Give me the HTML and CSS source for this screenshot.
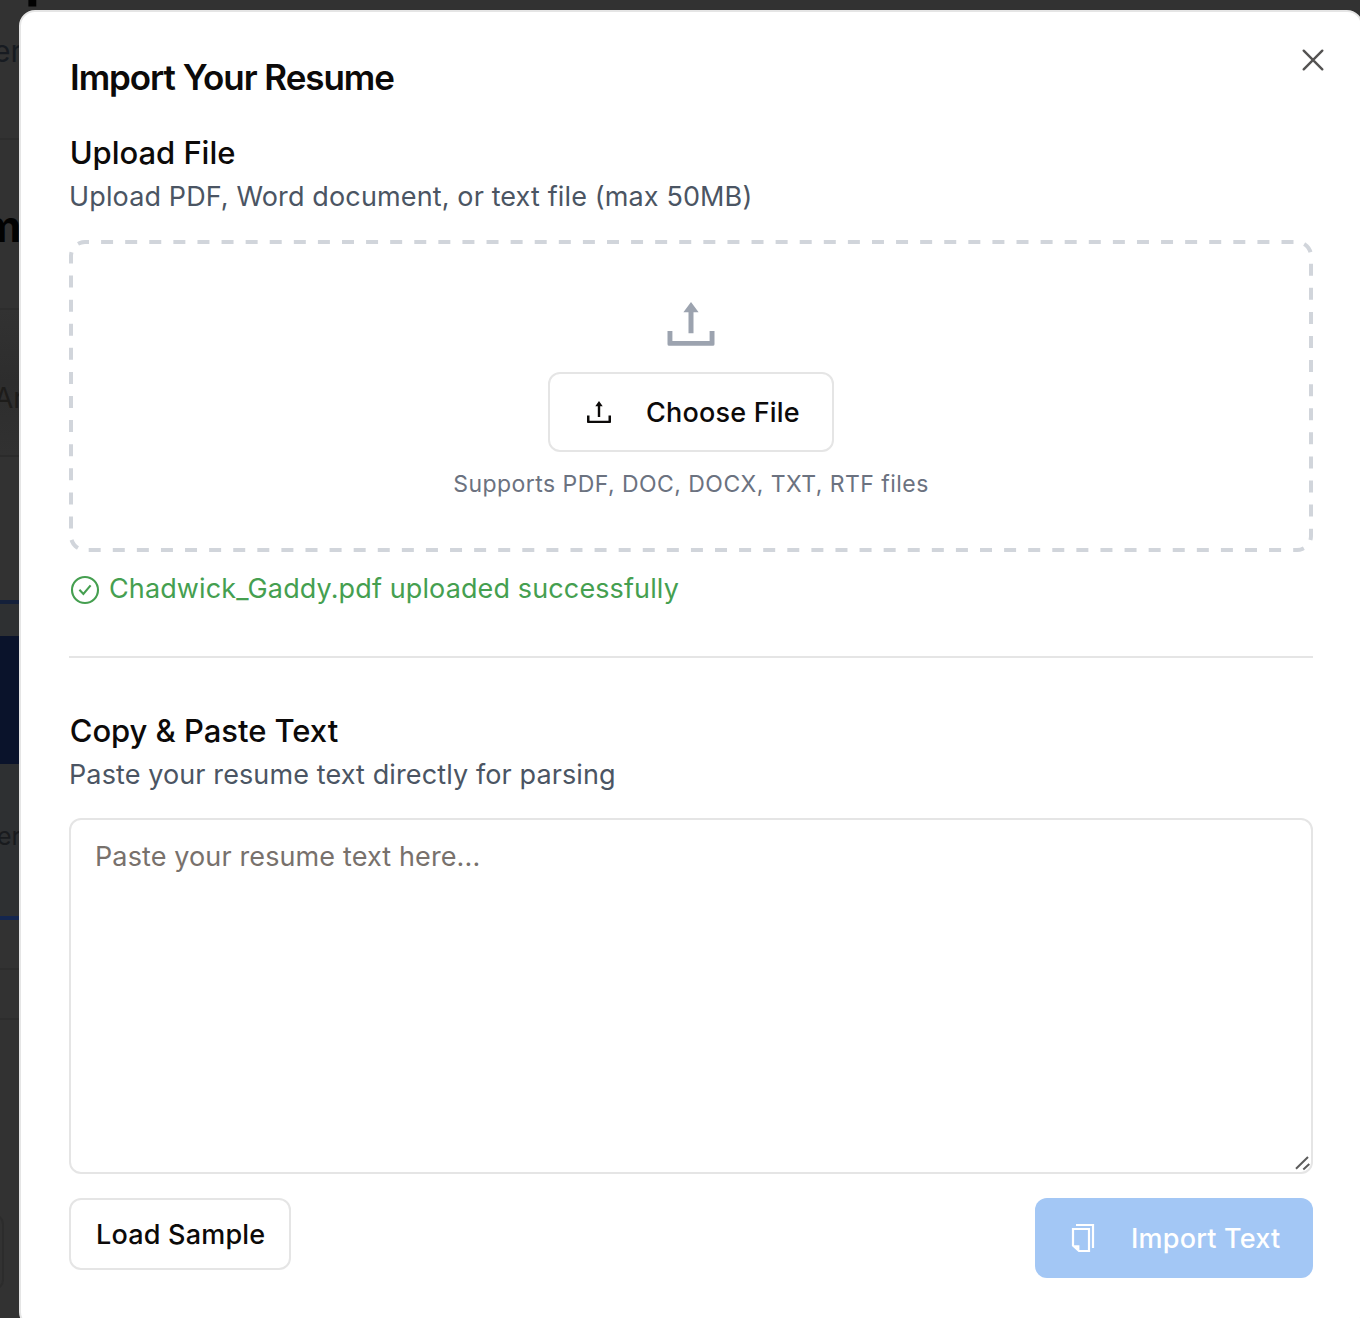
FILE: index.html
```html
<!DOCTYPE html>
<html lang="en">
<head>
<meta charset="utf-8">
<title>Import Your Resume</title>
<link rel="stylesheet" href="styles.css">
</head>
<body>
<div class="page" aria-hidden="true">
  <div class="page-head"><span class="page-title">p</span><span class="page-lead">era</span></div>
  <div class="page-section"><span class="page-subtitle">m</span></div>
  <div class="page-row">Ar</div>
  <div class="page-space"></div>
  <div class="page-card">
    <div class="page-bar"></div>
    <div class="page-note">er</div>
  </div>
  <div class="page-gap"></div>
  <div class="page-strip"></div>
  <div class="page-foot"><div class="page-box"></div></div>
</div>

<main class="dialog" role="dialog" aria-labelledby="dialog-title">
  <button class="close" aria-label="Close">
    <svg width="32" height="32" viewBox="0 0 32 32"><path d="M6.7 6.7 25.3 25.3M25.3 6.7 6.7 25.3"/></svg>
  </button>
  <h1 class="title" id="dialog-title"><span>Import Your Resume</span></h1>

  <section class="upload">
    <h2 class="heading heading-upload"><span>Upload File</span></h2>
    <p class="description description-upload"><span>Upload PDF, Word document, or text file (max 50MB)</span></p>
    <div class="dropzone">
      <svg class="dropzone-outline" viewBox="0 0 1244 312"><rect width="1244" height="312" rx="16"/></svg>
      <svg class="dropzone-icon" viewBox="0 0 64 64"><path d="M32 10 39.6 20.3H34.5V41.3H29.5V20.3H24.4ZM8.5 39H13.4V49H50.6V39H55.5V52.2Q55.5 53.8 53.8 53.8H10.2Q8.5 53.8 8.5 52.2Z"/></svg>
      <button class="button choose">
        <svg class="button-icon" viewBox="0 0 64 64"><path d="M32 10 39.4 20.3H34.4V42H29.6V20.3H24.6ZM8 39H13V49.4H51V39H56V52.2Q56 54 54.2 54H9.8Q8 54 8 52.2Z"/></svg>
        <span>Choose File</span>
      </button>
      <p class="hint"><span>Supports PDF, DOC, DOCX, TXT, RTF files</span></p>
    </div>
    <p class="status">
      <svg viewBox="0 0 32 32"><circle cx="16" cy="16" r="13"/><path d="M10.4 15.7 14.4 20 21.6 11.3"/></svg>
      <span>Chadwick_Gaddy.pdf uploaded successfully</span>
    </p>
  </section>

  <hr class="divider">

  <section class="paste">
    <h2 class="heading heading-paste"><span>Copy &amp; Paste Text</span></h2>
    <p class="description description-paste"><span>Paste your resume text directly for parsing</span></p>
    <div class="field">
      <textarea class="textarea" placeholder="Paste your resume text here..."></textarea>
      <svg class="grip" viewBox="0 0 16 16"><path d="M2 13.8 14 2M9.3 14.6 15.3 9"/></svg>
    </div>
    <div class="actions">
      <button class="button sample"><span>Load Sample</span></button>
      <button class="button import">
        <svg class="button-icon" viewBox="0 0 32 32"><path d="M6 7H22V29H12L6 23.5ZM6.5 24.3H11.3V29M9 3H26V26"/></svg>
        <span>Import Text</span>
      </button>
    </div>
  </section>
</main>
</body>
</html>
```

FILE: styles.css
```css
* { box-sizing: border-box; }

body {
  margin: 0;
  width: 1360px;
  height: 1318px;
  overflow: hidden;
  position: relative;
  background: #323232;
  color: #0c0a09;
  font-family: Inter, "Liberation Sans", sans-serif;
}

h1, h2, p { margin: 0; font-weight: 400; }
button, textarea { font-family: inherit; margin: 0; }
svg { display: block; flex: none; }

/* Dimmed page behind the dialog */
.page { width: 60px; height: 1318px; overflow: hidden; display: flex; flex-direction: column; }
.page > div { flex: none; }
.page-head { height: 140px; border-bottom: 2px solid #2d2d2d; display: flex; flex-direction: column; }
.page-title { height: 6px; padding-left: 25px; line-height: 0; font-size: 54px; font-weight: 700; color: #020202; margin-top: -23px; margin-bottom: 41px; }
.page-lead { margin-left: -7px; height: 56px; line-height: 55px; font-size: 30px; color: #171b21; }
.page-section { height: 170px; border-bottom: 2px solid #2d2d2d; }
.page-subtitle { display: block; margin-left: -18px; padding-top: 58px; line-height: 56px; font-size: 43px; font-weight: 700; color: #020202; }
.page-row { height: 147px; padding-top: 60px; border-bottom: 2px solid #2b2b2b; line-height: 56px; font-size: 28px; color: #1d1c1a; text-indent: -6px; background: linear-gradient(#323232, #2d2d2d 50%, #313131); }
.page-space { height: 143px; }
.page-card { height: 320px; padding-top: 32px; border-top: 4px solid #14203a; border-bottom: 4px solid #14264f; background: #2e3032; }
.page-bar { height: 128px; background: #0a132b; }
.page-note { margin-left: -3px; padding-top: 52px; line-height: 40px; font-size: 25px; color: #191b1e; }
.page-gap { height: 50px; border-bottom: 2px solid #2d2d2d; }
.page-strip { height: 50px; border-bottom: 2px solid #2d2d2d; }
.page-foot { height: 298px; padding-top: 194px; }
.page-box { width: 20px; height: 76px; margin-left: -16px; border: 2px solid #2c2c2c; border-radius: 12px; }

/* Dialog */
.dialog {
  position: absolute;
  left: 19px;
  top: 10px;
  width: 1344px;
  height: 1318px;
  padding: 48px;
  border: 2px solid #e5e5e5;
  border-radius: 16px;
  background: #fff;
  display: flex;
  flex-direction: column;
}

.close { position: absolute; top: 32px; right: 32px; padding: 0; border: 0; background: none; }
.close path { fill: none; stroke: #545352; stroke-width: 2.4; stroke-linecap: round; }

.title { height: 36px; margin-bottom: 32px; padding-left: 1px; line-height: 34px; font-size: 35px; font-weight: 600; letter-spacing: -1.06px; }
.heading { height: 48px; padding-left: 0.7px; line-height: 49px; font-size: 31px; font-weight: 500; letter-spacing: -0.04px; }
.description { height: 40px; margin-bottom: 24px; line-height: 41px; font-size: 27px; letter-spacing: 0.13px; color: #4b5563; }
.description-paste { letter-spacing: 0.11px; }

.dropzone {
  position: relative;
  height: 312px;
  padding-top: 52px;
  display: flex;
  flex-direction: column;
  align-items: center;
  gap: 16px;
}
.dropzone-outline { position: absolute; inset: 0; width: 1244px; height: 312px; border-radius: 16px; overflow: hidden; }
.dropzone-outline rect { fill: none; stroke: #d1d5db; stroke-width: 8; stroke-dasharray: 12 12.09; stroke-dashoffset: 8; }
.dropzone-icon { width: 64px; height: 64px; fill: #9ca3af; }

.button {
  display: flex;
  align-items: center;
  border: 2px solid #e5e5e5;
  border-radius: 12px;
  background: #fff;
  color: #0c0a09;
  font-size: 27px;
  font-weight: 500;
  letter-spacing: 0.2px;
  white-space: nowrap;
}
.button-icon { width: 32px; height: 32px; }
.choose { width: 286px; height: 80px; padding: 0 0 0 33px; gap: 31px; }
.choose svg { fill: #0c0a09; }
.hint { height: 32px; line-height: 32px; font-size: 23px; letter-spacing: 0.46px; color: #6b7280; }

.status { height: 40px; margin-top: 16px; display: flex; align-items: center; gap: 8px; line-height: 41px; font-size: 27px; letter-spacing: 0.12px; color: #459f50; }
.status svg { width: 32px; height: 32px; position: relative; top: 2px; fill: none; stroke: #459f50; stroke-width: 2.1; }

.divider { width: 100%; height: 2px; margin: 48px 0; border: 0; background: #e5e5e5; }

.field { position: relative; height: 356px; }
.textarea {
  display: block;
  width: 100%;
  height: 356px;
  padding: 16px 24px;
  border: 2px solid #e5e5e5;
  border-radius: 12px;
  background: #fff;
  resize: none;
  outline: 0;
  line-height: 41px;
  font-size: 27px;
  letter-spacing: 0.12px;
}
.textarea::placeholder { color: #78716c; opacity: 1; }
.grip { position: absolute; right: 3px; bottom: 3px; width: 16px; height: 16px; fill: none; stroke: #5c5c5c; stroke-width: 2; }

.actions { margin-top: 24px; display: flex; justify-content: space-between; align-items: flex-start; }
.sample { height: 72px; width: 222px; padding: 0 0 0 25px; }
.import { height: 80px; width: 278px; padding: 0 0 0 32px; gap: 32px; border: 0; background: #a3c7f5; color: #fff; }
.import svg { fill: none; stroke: #fff; stroke-width: 2.2; }
```
